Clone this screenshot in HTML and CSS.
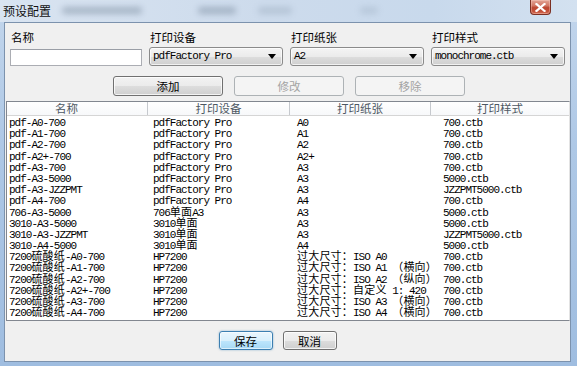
FILE: index.html
```html
<!DOCTYPE html>
<html lang="zh-CN">
<head>
<meta charset="utf-8">
<title>预设配置</title>
<link rel="stylesheet" href="styles.css">
</head>
<body>
<div class="window">
  <div class="titlebar">
    <div class="title">预设配置</div>
    <span class="ghost g1"></span>
    <span class="ghost g2"></span>
    <span class="ghost g3"></span>
    <span class="ghost g4"></span>
    <button class="close" aria-label="关闭">
      <svg width="11" height="9" viewBox="0 0 11 9"><path d="M1.5 1 L9.5 8 M9.5 1 L1.5 8" stroke="#fff" stroke-width="2.2" stroke-linecap="square"/></svg>
    </button>
  </div>
  <div class="client">
    <div class="fields">
      <div class="field name">
        <label>名称</label>
        <input class="textbox" type="text">
      </div>
      <div class="field">
        <label>打印设备</label>
        <div class="combo"><span class="mono">pdfFactory Pro</span><i class="arrow"></i></div>
      </div>
      <div class="field">
        <label>打印纸张</label>
        <div class="combo"><span class="mono">A2</span><i class="arrow"></i></div>
      </div>
      <div class="field">
        <label>打印样式</label>
        <div class="combo"><span class="mono">monochrome.ctb</span><i class="arrow"></i></div>
      </div>
    </div>
    <div class="actions">
      <button class="btn">添加</button>
      <button class="btn" disabled>修改</button>
      <button class="btn" disabled>移除</button>
    </div>
    <div class="list">
      <div class="head">
        <div class="hcell first">名称</div>
        <div class="hcell">打印设备</div>
        <div class="hcell">打印纸张</div>
        <div class="hcell last">打印样式</div>
      </div>
      <div class="rows mono">
        <div class="row"><span>pdf-A0-700</span><span>pdfFactory Pro</span><span>A0</span><span>700.ctb</span></div>
        <div class="row"><span>pdf-A1-700</span><span>pdfFactory Pro</span><span>A1</span><span>700.ctb</span></div>
        <div class="row"><span>pdf-A2-700</span><span>pdfFactory Pro</span><span>A2</span><span>700.ctb</span></div>
        <div class="row"><span>pdf-A2+-700</span><span>pdfFactory Pro</span><span>A2+</span><span>700.ctb</span></div>
        <div class="row"><span>pdf-A3-700</span><span>pdfFactory Pro</span><span>A3</span><span>700.ctb</span></div>
        <div class="row"><span>pdf-A3-5000</span><span>pdfFactory Pro</span><span>A3</span><span>5000.ctb</span></div>
        <div class="row"><span>pdf-A3-JZZPMT</span><span>pdfFactory Pro</span><span>A3</span><span>JZZPMT5000.ctb</span></div>
        <div class="row"><span>pdf-A4-700</span><span>pdfFactory Pro</span><span>A4</span><span>700.ctb</span></div>
        <div class="row"><span>706-A3-5000</span><span>706<b class="c">单面</b>A3</span><span>A3</span><span>5000.ctb</span></div>
        <div class="row"><span>3010-A3-5000</span><span>3010<b class="c">单面</b></span><span>A3</span><span>5000.ctb</span></div>
        <div class="row"><span>3010-A3-JZZPMT</span><span>3010<b class="c">单面</b></span><span>A3</span><span>JZZPMT5000.ctb</span></div>
        <div class="row"><span>3010-A4-5000</span><span>3010<b class="c">单面</b></span><span>A4</span><span>5000.ctb</span></div>
        <div class="row"><span>7200<b class="c">硫酸纸</b>-A0-700</span><span>HP7200</span><span><b class="c">过大尺寸：</b>ISO A0</span><span>700.ctb</span></div>
        <div class="row"><span>7200<b class="c">硫酸纸</b>-A1-700</span><span>HP7200</span><span><b class="c">过大尺寸：</b>ISO A1 <b class="c">（横向）</b></span><span>700.ctb</span></div>
        <div class="row"><span>7200<b class="c">硫酸纸</b>-A2-700</span><span>HP7200</span><span><b class="c">过大尺寸：</b>ISO A2 <b class="c">（纵向）</b></span><span>700.ctb</span></div>
        <div class="row"><span>7200<b class="c">硫酸纸</b>-A2+-700</span><span>HP7200</span><span><b class="c">过大尺寸：自定义</b> 1: 420</span><span>700.ctb</span></div>
        <div class="row"><span>7200<b class="c">硫酸纸</b>-A3-700</span><span>HP7200</span><span><b class="c">过大尺寸：</b>ISO A3 <b class="c">（横向）</b></span><span>700.ctb</span></div>
        <div class="row"><span>7200<b class="c">硫酸纸</b>-A4-700</span><span>HP7200</span><span><b class="c">过大尺寸：</b>ISO A4 <b class="c">（横向）</b></span><span>700.ctb</span></div>
      </div>
    </div>
    <div class="footer">
      <button class="btn default">保存</button>
      <button class="btn">取消</button>
    </div>
  </div>
</div>
</body>
</html>
```

FILE: styles.css
```css
* { box-sizing: border-box; }

html, body {
  margin: 0;
  padding: 0;
}

body {
  width: 577px;
  height: 366px;
  overflow: hidden;
  font-family: "Noto Sans CJK SC", "Noto Sans", sans-serif;
  font-size: 11.5px;
  color: #000;
  background: #a9c4e4;
}

.window {
  width: 577px;
  height: 366px;
  display: flex;
  flex-direction: column;
  background: linear-gradient(to bottom, #c3d6ec 0%, #aec8e6 40%, #9fbde0 100%);
}

.titlebar {
  position: relative;
  height: 22px;
  flex: none;
  display: flex;
  align-items: flex-start;
  background: linear-gradient(to right, #d9e4f1 0%, #cddbec 45%, #c8d9ec 75%, #d3e1f0 100%);
}

.title {
  padding: 3px 0 0 3px;
  line-height: 16px;
  font-size: 12px;
  color: #111;
  position: relative;
  z-index: 1;
}

.ghost {
  position: absolute;
  top: 7px;
  height: 7px;
  background: #6d7f93;
  border-radius: 3px;
  filter: blur(3px);
  opacity: 0.45;
}
.g1 { left: 62px; width: 80px; }
.g2 { left: 198px; width: 38px; }
.g3 { left: 258px; width: 34px; opacity: 0.25; }
.g4 { left: 360px; width: 18px; opacity: 0.2; }

.close {
  margin: 0 26px 0 auto;
  width: 21px;
  height: 15px;
  padding: 0;
  border: 1px solid #7a2f22;
  border-top: none;
  border-radius: 0 0 4px 4px;
  background: linear-gradient(to bottom, #e3a596 0%, #d27865 40%, #bc4630 55%, #c6553d 85%, #d87760 100%);
  display: flex;
  align-items: center;
  justify-content: center;
  box-shadow: inset 0 0 0 1px rgba(255, 220, 210, 0.35);
}

.client {
  flex: 1;
  margin: 0 6px 4px 4px;
  border: 1px solid #7c92ad;
  background: #f0f0f0;
  display: flex;
  flex-direction: column;
  align-items: flex-start;
}

.fields {
  display: flex;
  gap: 7px;
  padding: 6px 0 0 5px;
}

.field {
  display: flex;
  flex-direction: column;
  width: 134px;
}
.field.name { width: 132px; }

.field label {
  line-height: 16px;
  height: 16px;
  padding-left: 1px;
}

.textbox {
  margin-top: 4px;
  width: 132px;
  height: 17px;
  border: 1px solid #abadb3;
  border-top-color: #9a9ea6;
  background: #fff;
  padding: 0;
}

.combo {
  margin-top: 2px;
  height: 19px;
  border: 1px solid #8a8a8a;
  border-radius: 3px;
  background: linear-gradient(to bottom, #f4f4f4 0%, #ebebeb 50%, #dddddd 51%, #cfcfcf 100%);
  display: flex;
  align-items: center;
  padding: 0 0 0 3px;
  box-shadow: inset 0 0 0 1px rgba(255, 255, 255, 0.7);
}

.mono {
  font-family: "Liberation Mono", "Noto Sans CJK SC", monospace;
  font-size: 11px;
  letter-spacing: -1px;
}

.combo .mono {
  flex: 1;
  line-height: 17px;
}

.arrow {
  width: 0;
  height: 0;
  border-left: 4px solid transparent;
  border-right: 4px solid transparent;
  border-top: 5px solid #000;
  margin-right: 6px;
}

.actions {
  display: flex;
  gap: 11px;
  margin: 10px 0 0 108px;
}

.btn {
  width: 110px;
  height: 20px;
  padding: 0;
  font-family: "Noto Sans CJK SC", sans-serif;
  font-size: 11.5px;
  line-height: 16px;
  color: #000;
  border: 1px solid #707070;
  border-radius: 3px;
  background: linear-gradient(to bottom, #f2f2f2 0%, #ebebeb 50%, #dddddd 51%, #cfcfcf 100%);
  box-shadow: inset 0 0 0 1px rgba(255, 255, 255, 0.75);
}

.btn:disabled {
  color: #a3a3a3;
  border-color: #adb2b5;
  background: #f4f4f4;
  box-shadow: none;
}

.list {
  margin: 5px 0 0 1px;
  width: 564px;
  height: 220px;
  border: 1px solid #828790;
  border-right-color: #e3e3e3;
  background: #fff;
  overflow: hidden;
}

.head {
  display: grid;
  grid-template-columns: 141px 142px 141px 1fr;
  height: 14px;
  border-bottom: 1px solid #d5d5d5;
  background: linear-gradient(to bottom, #ffffff, #f7f8fa);
}

.hcell {
  text-align: center;
  line-height: 13px;
  color: #4d5863;
  border-right: 1px solid #c6c9ce;
  font-size: 11.5px;
}
.hcell.first { padding-right: 21px; }
.hcell.last { border-right: none; }

.rows {
  padding: 2px 0 0 2px;
}

.row {
  display: grid;
  grid-template-columns: 144px 144px 146px 1fr;
  height: 11.2px;
  line-height: 11.2px;
  white-space: nowrap;
}

.c {
  font-weight: normal;
  letter-spacing: 0.2px;
}

.footer {
  align-self: stretch;
  display: flex;
  justify-content: center;
  gap: 10px;
  margin-top: 10px;
  padding-right: 20px;
}

.footer .btn {
  width: 54px;
  height: 19px;
}

.btn.default {
  border-color: #3c7fb1;
  background: linear-gradient(to bottom, #eaf6fd 0%, #d9f0fc 50%, #bee6fd 51%, #a7d9f5 100%);
  box-shadow: inset 0 0 0 1px rgba(255, 255, 255, 0.6), 0 0 2px rgba(60, 127, 177, 0.6);
}
```
